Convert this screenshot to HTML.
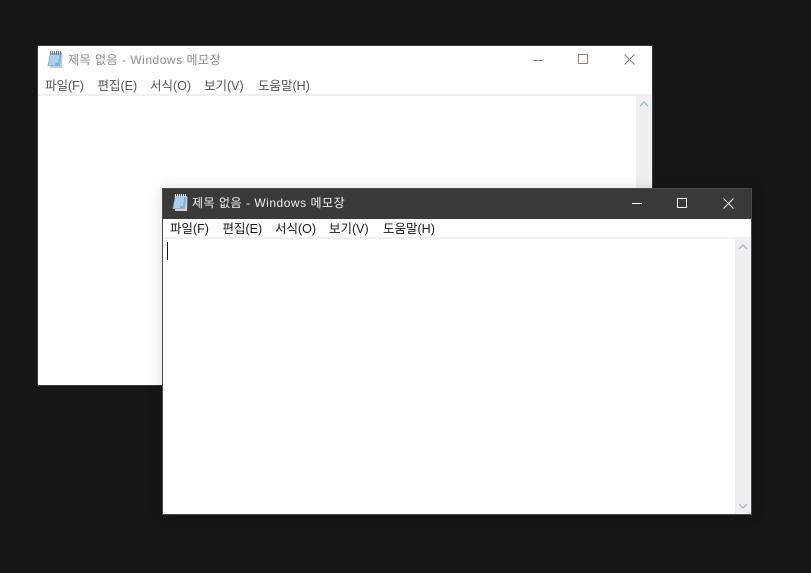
<!DOCTYPE html>
<html lang="ko">
<head>
<meta charset="utf-8">
<style>
html,body{margin:0;padding:0;background:#161616;}
body{width:811px;height:573px;position:relative;overflow:hidden;font-family:"Liberation Sans","Noto Sans CJK KR","NanumGothic",sans-serif;}
.win{position:absolute;box-sizing:border-box;background:#fff;border:1px solid #3a3a3a;}
.abs{position:absolute;white-space:nowrap;}
.title{font-size:12px;line-height:16px;letter-spacing:.52px;}
.menu{font-size:12.5px;line-height:16px;color:#1a1a1a;}
.line{position:absolute;height:2px;background:#f0f0f0;left:0;right:0;}
.sb{position:absolute;width:16px;background:#f0f0f0;}
svg{position:absolute;display:block;}
</style>
</head>
<body>

<!-- back window -->
<div class="win" id="w1" style="left:37px;top:45px;width:616px;height:341px;">
  <svg style="left:8px;top:5px" width="18" height="18" viewBox="0 0 18 18">
    <path d="M4 3H16.5L16 17H4Z" fill="#d9c8ba"/>
    <path d="M4 2H16L14 15H1.500Z" fill="#7db5e3"/>
    <path d="M4.500 5H13M4 7H13M3.500 9H12.500M3.200 11H12M3 13H9" stroke="#d6e9f7" stroke-width="1"/>
    <path d="M4.500 0V3.500M6.500 0V3.500M8.500 0V3.500M10.500 0V3.500M12.500 0V3.500M14.500 0V3.500" stroke="#777" stroke-width="1"/>
  </svg>
  <div class="abs title" style="left:30px;top:6px;color:#8c8c8c;">제목 없음 - Windows 메모장</div>
  <svg style="left:495px;top:9px" width="12" height="12" viewBox="0 0 12 12"><path d="M0 5.500H10" stroke="#a07b74" stroke-width="1"/></svg>
  <svg style="left:540px;top:8px" width="11" height="11" viewBox="0 0 11 11"><rect x=".5" y=".5" width="9" height="9" fill="none" stroke="#9c7f7a" stroke-width="1"/></svg>
  <svg style="left:586px;top:8px" width="12" height="12" viewBox="0 0 12 12"><path d="M.5 .5L10.500 10.500M10.500 .5L.5 10.500" stroke="#8a7775" stroke-width="1"/></svg>
  <div class="abs menu" style="left:7px;top:32px;color:#555;">파일(F)</div>
  <div class="abs menu" style="left:59.500px;top:32px;color:#555;">편집(E)</div>
  <div class="abs menu" style="left:112px;top:32px;color:#555;">서식(O)</div>
  <div class="abs menu" style="left:166px;top:32px;color:#555;">보기(V)</div>
  <div class="abs menu" style="left:220px;top:32px;color:#555;">도움말(H)</div>
  <div class="line" style="top:48px;"></div>
  <div class="sb" style="left:598px;top:50px;height:289px;"></div>
  <svg style="left:601px;top:54px" width="10" height="8" viewBox="0 0 10 8"><path d="M1 6L5 2L9 6" fill="none" stroke="#a9bcc6" stroke-width="1.400"/></svg>
</div>

<!-- front window -->
<div class="win" id="w2" style="left:162px;top:188px;width:590px;height:327px;border-color:#4a4a4a;box-shadow:0 0 14px rgba(0,0,0,.13);">
  <div class="abs" style="left:0;top:0;right:0;height:30px;background:#3a3a3a;"></div>
  <svg style="left:8px;top:5px" width="18" height="18" viewBox="0 0 18 18">
    <path d="M4 3H16.500L16 17H4Z" fill="#e6d3c4"/>
    <path d="M4 2H16L14 15H1.500Z" fill="#7db5e3"/>
    <path d="M4.500 5H13M4 7H13M3.500 9H12.500M3.200 11H12M3 13H9" stroke="#d6e9f7" stroke-width="1"/>
    <path d="M4.500 0V3.500M6.500 0V3.500M8.500 0V3.500M10.500 0V3.500M12.500 0V3.500M14.500 0V3.500" stroke="#eee" stroke-width="1"/>
  </svg>
  <div class="abs title" style="left:29px;top:6px;color:#f2f2f2;">제목 없음 - Windows 메모장</div>
  <svg style="left:469px;top:9px" width="12" height="12" viewBox="0 0 12 12"><path d="M0 5.500H10" stroke="#fff" stroke-width="1"/></svg>
  <svg style="left:514px;top:9px" width="11" height="11" viewBox="0 0 11 11"><rect x=".5" y=".5" width="9" height="9" fill="none" stroke="#fff" stroke-width="1"/></svg>
  <svg style="left:560px;top:9px" width="12" height="12" viewBox="0 0 12 12"><path d="M.5 .5L10.500 10.500M10.500 .5L.5 10.500" stroke="#fff" stroke-width="1.100"/></svg>
  <div class="abs menu" style="left:7px;top:32px;">파일(F)</div>
  <div class="abs menu" style="left:59.500px;top:32px;">편집(E)</div>
  <div class="abs menu" style="left:112px;top:32px;">서식(O)</div>
  <div class="abs menu" style="left:166px;top:32px;">보기(V)</div>
  <div class="abs menu" style="left:220px;top:32px;">도움말(H)</div>
  <div class="line" style="top:48px;"></div>
  <div class="abs" style="left:4px;top:53px;width:1px;height:18px;background:#111;"></div>
  <div class="sb" style="left:572px;top:50px;height:275px;"></div>
  <svg style="left:575px;top:54px" width="10" height="8" viewBox="0 0 10 8"><path d="M1 6L5 2L9 6" fill="none" stroke="#a9bcc6" stroke-width="1.400"/></svg>
  <svg style="left:575px;top:313px" width="10" height="8" viewBox="0 0 10 8"><path d="M1 2L5 6L9 2" fill="none" stroke="#a9bcc6" stroke-width="1.400"/></svg>
</div>

</body>
</html>
